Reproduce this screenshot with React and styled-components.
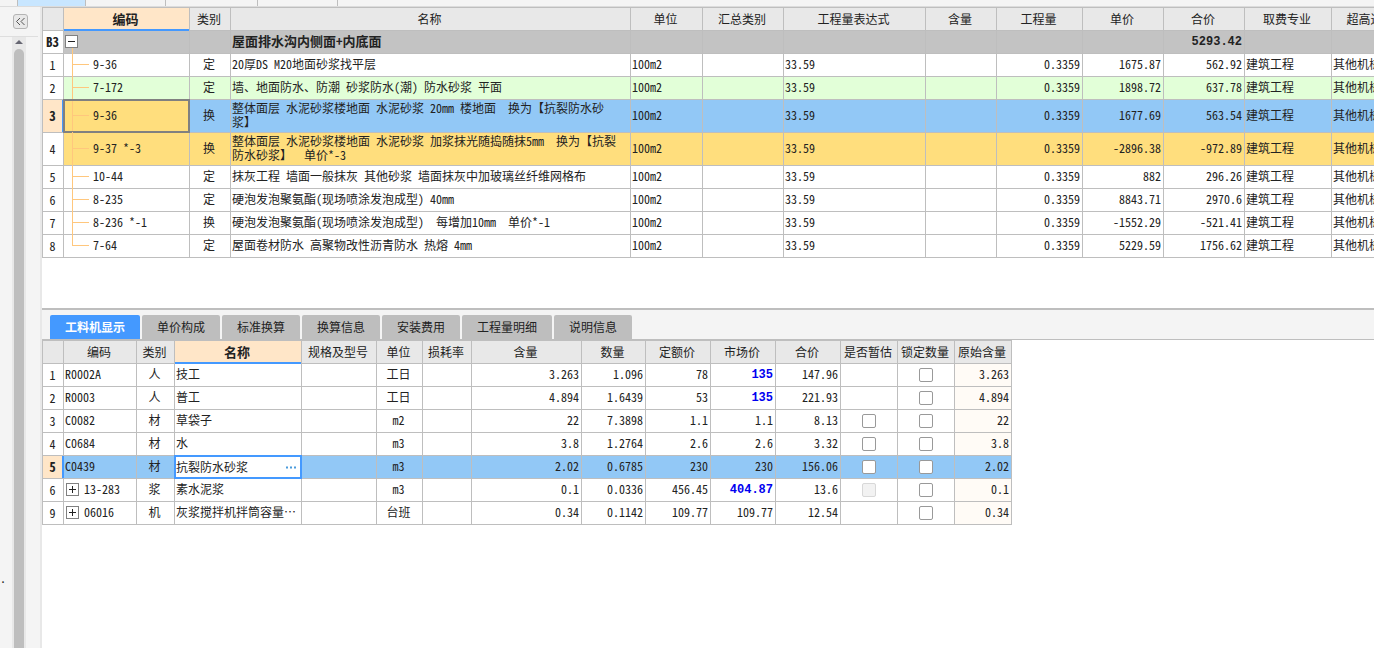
import React, { useState } from 'react'
import styled, { createGlobalStyle, css } from 'styled-components'

const colors = {
  line: '#bebebe',
  panel: '#f4f4f4',
  head: '#e8e8e8',
  headActive: '#ffe6c8',
  accent: '#4499ff',
  tree: '#ffc77d',
  group: '#c3c3c3',
  green: '#e2ffd8',
  blue: '#92c8f6',
  yellow: '#ffde7d',
  origin: '#fffbf6'
}

const stripTabs = [
  { width: 18 },
  { width: 68, active: true },
  { width: 80 },
  { width: 92 },
  { width: 80 }
]

const quotaColumns = [
  { key: 'no', title: '', width: 21 },
  { key: 'code', title: '编码', width: 126, active: true },
  { key: 'kind', title: '类别', width: 41, align: 'center' },
  { key: 'name', title: '名称', width: 400 },
  { key: 'unit', title: '单位', width: 72 },
  { key: 'summary', title: '汇总类别', width: 81 },
  { key: 'expression', title: '工程量表达式', width: 142 },
  { key: 'content', title: '含量', width: 71, align: 'right' },
  { key: 'quantity', title: '工程量', width: 86, align: 'right' },
  { key: 'price', title: '单价', width: 81, align: 'right' },
  { key: 'total', title: '合价', width: 81, align: 'right' },
  { key: 'major', title: '取费专业', width: 87 },
  { key: 'height', title: '超高过高类别', width: 104 }
]

const common = {
  unit: '100m2',
  expression: '33.59',
  quantity: '0.3359',
  major: '建筑工程',
  height: '其他机械工程'
}

const quotaRows = [
  { ...common, no: '1', code: '9-36', kind: '定', name: '20厚DS M20地面砂浆找平层', price: '1675.87', total: '562.92' },
  { ...common, no: '2', code: '7-172', kind: '定', name: '墙、地面防水、防潮 砂浆防水(潮) 防水砂浆 平面', price: '1898.72', total: '637.78', color: colors.green },
  { ...common, no: '3', code: '9-36', kind: '换', name: '整体面层 水泥砂浆楼地面 水泥砂浆 20mm 楼地面  换为【抗裂防水砂\n浆】', price: '1677.69', total: '563.54', color: colors.blue, tall: true, selected: true },
  { ...common, no: '4', code: '9-37 *-3', kind: '换', name: '整体面层 水泥砂浆楼地面 水泥砂浆 加浆抹光随捣随抹5mm  换为【抗裂\n防水砂浆】  单价*-3', price: '-2896.38', total: '-972.89', color: colors.yellow, tall: true },
  { ...common, no: '5', code: '10-44', kind: '定', name: '抹灰工程 墙面一般抹灰 其他砂浆 墙面抹灰中加玻璃丝纤维网格布', price: '882', total: '296.26' },
  { ...common, no: '6', code: '8-235', kind: '定', name: '硬泡发泡聚氨酯(现场喷涂发泡成型) 40mm', price: '8843.71', total: '2970.6' },
  { ...common, no: '7', code: '8-236 *-1', kind: '换', name: '硬泡发泡聚氨酯(现场喷涂发泡成型)  每增加10mm  单价*-1', price: '-1552.29', total: '-521.41' },
  { ...common, no: '8', code: '7-64', kind: '定', name: '屋面卷材防水 高聚物改性沥青防水 热熔 4mm', price: '5229.59', total: '1756.62' }
]

const tabs = ['工料机显示', '单价构成', '标准换算', '换算信息', '安装费用', '工程量明细', '说明信息']

const resourceColumns = [
  { key: 'no', title: '', width: 21 },
  { key: 'code', title: '编码', width: 73 },
  { key: 'kind', title: '类别', width: 38, align: 'center' },
  { key: 'name', title: '名称', width: 127, active: true },
  { key: 'spec', title: '规格及型号', width: 75 },
  { key: 'unit', title: '单位', width: 46, align: 'center' },
  { key: 'loss', title: '损耗率', width: 49 },
  { key: 'content', title: '含量', width: 110, align: 'right' },
  { key: 'amount', title: '数量', width: 64, align: 'right' },
  { key: 'fixed', title: '定额价', width: 65, align: 'right' },
  { key: 'market', title: '市场价', width: 65, align: 'right' },
  { key: 'total', title: '合价', width: 65, align: 'right' },
  { key: 'estimate', title: '是否暂估', width: 57, align: 'center' },
  { key: 'lock', title: '锁定数量', width: 57, align: 'center' },
  { key: 'origin', title: '原始含量', width: 57, align: 'right' }
]

const resourceRows = [
  { no: '1', code: 'R0002A', kind: '人', name: '技工', unit: '工日', content: '3.263', amount: '1.096', fixed: '78', market: '135', total: '147.96', changed: true },
  { no: '2', code: 'R0003', kind: '人', name: '普工', unit: '工日', content: '4.894', amount: '1.6439', fixed: '53', market: '135', total: '221.93', changed: true },
  { no: '3', code: 'C0082', kind: '材', name: '草袋子', unit: 'm2', content: '22', amount: '7.3898', fixed: '1.1', market: '1.1', total: '8.13', estimate: 'on' },
  { no: '4', code: 'C0684', kind: '材', name: '水', unit: 'm3', content: '3.8', amount: '1.2764', fixed: '2.6', market: '2.6', total: '3.32', estimate: 'on' },
  { no: '5', code: 'C0439', kind: '材', name: '抗裂防水砂浆', unit: 'm3', content: '2.02', amount: '0.6785', fixed: '230', market: '230', total: '156.06', estimate: 'on', selected: true },
  { no: '6', code: '13-283', kind: '浆', name: '素水泥浆', unit: 'm3', content: '0.1', amount: '0.0336', fixed: '456.45', market: '404.87', total: '13.6', estimate: 'off', changed: true, nested: true },
  { no: '9', code: '06016', kind: '机', name: '灰浆搅拌机拌筒容量⋯', unit: '台班', content: '0.34', amount: '0.1142', fixed: '109.77', market: '109.77', total: '12.54', nested: true }
]

const Columns = ({ columns }) => (
  <colgroup>
    {columns.map((column) => (
      <col key={column.key} width={column.width} />
    ))}
  </colgroup>
)

const HeadRow = ({ columns }) => (
  <thead>
    <tr>
      {columns.map((column) => (
        <HeadCell key={column.key} $active={column.active}>{column.title}</HeadCell>
      ))}
    </tr>
  </thead>
)

const tableWidth = (columns) => columns.reduce((sum, column) => sum + column.width, 1)

const ToggleIcon = ({ open }) => (
  <svg width="11" height="11" viewBox="0 0 11 11" aria-hidden="true">
    <path d={open ? 'M2 5.5H9' : 'M2 5.5H9M5.5 2V9'} stroke="#222" fill="none" />
  </svg>
)

const Sidebar = () => (
  <Side>
    <SideHead>
      <CollapseButton aria-label="收起">
        <svg width="13" height="13" viewBox="0 0 13 13" aria-hidden="true">
          <path d="M6 3L2.5 6.5L6 10M10.5 3L7 6.5L10.5 10" stroke="#555" fill="none" />
        </svg>
      </CollapseButton>
    </SideHead>
    <SideBody>
      <SideTree>.</SideTree>
      <ScrollTrack>
        <svg width="14" height="12" viewBox="0 0 14 12" aria-hidden="true">
          <path d="M3 7L7 3L11 7Z" fill="#666672" />
        </svg>
        <ScrollThumb />
      </ScrollTrack>
    </SideBody>
  </Side>
)

const QuotaTable = () => (
  <Table $width={tableWidth(quotaColumns)}>
    <Columns columns={quotaColumns} />
    <HeadRow columns={quotaColumns} />
    <tbody>
      <Row $color={colors.group}>
        <NumberCell $strong>B3</NumberCell>
        <Cell>
          <Toggle aria-label="折叠"><ToggleIcon open /></Toggle>
          <Stem />
        </Cell>
        <Cell />
        <Cell $strong>屋面排水沟内侧面+内底面</Cell>
        <Cell />
        <Cell />
        <Cell />
        <Cell />
        <Cell />
        <Cell />
        <Cell $align="right" $boldNumber>5293.42</Cell>
        <Cell />
        <Cell />
      </Row>
      {quotaRows.map((row, index) => (
        <Row key={row.no} $color={row.color} $tall={row.tall}>
          <NumberCell $selected={row.selected}>{row.no}</NumberCell>
          <CodeCell $color={row.selected && colors.yellow} $outline={row.selected && '#808080'}>
            <Branch $last={index === quotaRows.length - 1} />
            {row.code}
          </CodeCell>
          {quotaColumns.slice(2).map((column) => (
            <Cell key={column.key} $align={column.align}>{row[column.key]}</Cell>
          ))}
        </Row>
      ))}
    </tbody>
  </Table>
)

const NameEditor = ({ value }) => {
  const [name, setName] = useState(value)
  return (
    <Editor>
      <NameInput aria-label="名称" value={name} onChange={(e) => setName(e.target.value)} />
      <MoreButton aria-label="选择材料">
        <svg width="11" height="3" viewBox="0 0 11 3" aria-hidden="true">
          <path d="M0 0.5H2V2.5H0ZM4 0.5H6V2.5H4ZM8 0.5H10V2.5H8Z" fill="#4b9bdc" />
        </svg>
      </MoreButton>
    </Editor>
  )
}

const ResourceTable = () => (
  <Table $width={tableWidth(resourceColumns)}>
    <Columns columns={resourceColumns} />
    <HeadRow columns={resourceColumns} />
    <tbody>
      {resourceRows.map((row) => (
        <Row key={row.no} $color={row.selected && colors.blue}>
          <NumberCell $selected={row.selected}>{row.no}</NumberCell>
          <Cell>
            {row.nested
              ? <Nested><Toggle aria-label="展开"><ToggleIcon /></Toggle>{row.code}</Nested>
              : row.code}
          </Cell>
          <Cell $align="center">{row.kind}</Cell>
          <Cell $color={row.selected && '#fff'} $outline={row.selected && colors.accent}>
            {row.selected ? <NameEditor value={row.name} /> : row.name}
          </Cell>
          <Cell />
          <Cell $align="center">{row.unit}</Cell>
          <Cell />
          <Cell $align="right">{row.content}</Cell>
          <Cell $align="right">{row.amount}</Cell>
          <Cell $align="right">{row.fixed}</Cell>
          <Cell $align="right" $boldNumber={row.changed} $changed={row.changed}>{row.market}</Cell>
          <Cell $align="right">{row.total}</Cell>
          <CheckCell>
            {row.estimate && <Checkbox aria-label="是否暂估" disabled={row.estimate === 'off'} />}
          </CheckCell>
          <CheckCell><Checkbox aria-label="锁定数量" /></CheckCell>
          <Cell $align="right" $color={row.selected ? undefined : colors.origin}>{row.content}</Cell>
        </Row>
      ))}
    </tbody>
  </Table>
)

const App = () => {
  const [current, setCurrent] = useState(tabs[0])

  return (
    <Page lang="zh-CN">
      <GlobalStyle />
      <Strip>
        {stripTabs.map((tab, index) => (
          <StripTab key={index} $width={tab.width} $active={tab.active} />
        ))}
      </Strip>
      <Workspace>
        <Sidebar />
        <Main>
          <QuotaPane><QuotaTable /></QuotaPane>
          <TabBar>
            {tabs.map((tab) => (
              <Tab key={tab} $active={tab === current} onClick={() => setCurrent(tab)}>{tab}</Tab>
            ))}
          </TabBar>
          <ResourcePane><ResourceTable /></ResourcePane>
        </Main>
      </Workspace>
    </Page>
  )
}

export default App

const GlobalStyle = createGlobalStyle`
  * {
    box-sizing: border-box;
  }

  body {
    margin: 0;
    overflow: hidden;
    background: #fff;
  }

  button, input {
    margin: 0;
    padding: 0;
    font: inherit;
    font-feature-settings: inherit;
    color: inherit;
  }
`

/* hwid keeps latin letters and digits at half the width of a hanzi */
const Page = styled.div`
  display: flex;
  flex-direction: column;
  height: 100vh;
  overflow: hidden;
  color: #222;
  font-family: 'Noto Sans CJK SC', sans-serif;
  font-size: 12px;
  line-height: 14px;
  font-feature-settings: 'hwid' 1;
`

const Strip = styled.div`
  flex: 0 0 auto;
  display: flex;
  height: 7px;
  background: ${colors.panel};
  border-bottom: 1px solid #dcdcdc;
`

const StripTab = styled.div`
  width: ${(props) => props.$width}px;
  background: ${(props) => props.$active ? '#c8e6ff' : 'transparent'};
  border-right: 1px solid ${colors.line};
`

const Workspace = styled.div`
  flex: 1 1 auto;
  display: flex;
  min-height: 0;
`

const Side = styled.aside`
  flex: 0 0 auto;
  display: flex;
  flex-direction: column;
  width: 42px;
  background: ${colors.panel};
  border-right: 2px solid ${colors.head};
`

const SideHead = styled.div`
  display: flex;
  height: 30px;
  margin-right: 2px;
  padding: 7px 0 0 13px;
  border-bottom: 1px solid #dedede;
`

const CollapseButton = styled.button`
  display: flex;
  width: 15px;
  height: 15px;
  background: #e8e8e8;
  border: 1px solid #b4b4b4;
  border-radius: 3px;
`

const SideBody = styled.div`
  flex: 1 1 auto;
  display: flex;
`

const SideTree = styled.div`
  width: 12px;
  padding-top: 534px;
`

const ScrollTrack = styled.div`
  display: flex;
  flex-direction: column;
  width: 14px;
  background: ${colors.head};
`

const ScrollThumb = styled.div`
  flex: 1 1 auto;
  margin: 0 2px;
  background: ${colors.line};
  border-radius: 5px 5px 0 0;
`

const Main = styled.main`
  flex: 1 1 auto;
  display: flex;
  flex-direction: column;
  min-width: 0;
`

const QuotaPane = styled.section`
  flex: 0 0 auto;
  overflow: hidden;
  padding-bottom: 50px;
  border-bottom: 2px solid ${colors.line};
`

const TabBar = styled.nav`
  flex: 0 0 auto;
  display: flex;
  gap: 2px;
  padding: 5px 8px 0;
  background: ${colors.panel};
  border-bottom: 1px solid ${colors.line};
`

const Tab = styled.button`
  height: 24px;
  padding: 0 15px;
  background: ${(props) => props.$active ? colors.accent : colors.line};
  border: 0;
  border-radius: 2px 2px 0 0;
  color: ${(props) => props.$active ? '#fff' : '#222'};
  font-weight: ${(props) => props.$active ? 700 : 400};
`

const ResourcePane = styled.section`
  flex: 1 1 auto;
  min-height: 0;
  overflow: hidden;
`

const Table = styled.table`
  width: ${(props) => props.$width}px;
  table-layout: fixed;
  border-collapse: collapse;
`

const HeadCell = styled.th`
  position: relative;
  height: 23px;
  padding: 0 2px 0 0;
  background: ${(props) => props.$active ? colors.headActive : colors.head};
  border: 1px solid ${colors.line};
  font-weight: 400;
  white-space: nowrap;

  ${(props) => props.$active && css`
    font-size: 13px;
    font-weight: 700;

    &::after {
      content: '';
      position: absolute;
      left: 0;
      right: 0;
      bottom: -1px;
      height: 2px;
      background: ${colors.accent};
    }
  `}
`

const Row = styled.tr`
  height: ${(props) => props.$tall ? 33 : 23}px;
  background: ${(props) => props.$color || '#fff'};
`

const cellPadding = {
  left: '0 2px 2px 1px',
  center: '0 3px 2px 1px',
  right: '0 2px 2px 1px'
}

const Cell = styled.td`
  position: relative;
  padding: ${(props) => cellPadding[props.$align || 'left']};
  background: ${(props) => props.$color || 'transparent'};
  background-clip: padding-box;
  border: 1px solid ${colors.line};
  text-align: ${(props) => props.$align || 'left'};
  vertical-align: middle;
  white-space: pre;

  ${(props) => props.$strong && css`
    font-size: 13px;
    font-weight: 700;
  `}

  ${(props) => props.$boldNumber && css`
    padding-bottom: 0;
    font-family: 'Liberation Mono', monospace;
    font-weight: 700;
  `}

  ${(props) => props.$changed && css`
    color: #0000f0;
  `}

  ${(props) => props.$outline && css`
    padding-bottom: 0;

    &::after {
      content: '';
      position: absolute;
      inset: -1px;
      border: 2px solid ${props.$outline};
      pointer-events: none;
    }
  `}
`

const NumberCell = styled(Cell)`
  padding: 0 1px 0 0;
  background: ${(props) => props.$selected ? colors.headActive : '#fff'};
  text-align: center;

  ${(props) => props.$selected && css`
    font-size: 13px;
    font-weight: 700;

    &::after {
      content: '';
      position: absolute;
      top: 0;
      bottom: 0;
      right: -1px;
      width: 2px;
      background: ${colors.accent};
    }
  `}
`

const CodeCell = styled(Cell)`
  padding: 0 0 2px 29px;
`

const CheckCell = styled(Cell)`
  padding: 0;
`

const Stem = styled.span`
  position: absolute;
  left: 8px;
  top: 17px;
  bottom: 0;
  border-left: 1px solid ${colors.tree};
`

const Branch = styled.span`
  position: absolute;
  left: 8px;
  top: -1px;
  bottom: ${(props) => props.$last ? '50%' : '0'};
  border-left: 1px solid ${colors.tree};

  &::after {
    content: '';
    position: absolute;
    left: 0;
    bottom: ${(props) => props.$last ? '0' : '50%'};
    width: 16px;
    border-top: 1px solid ${colors.tree};
  }
`

const Nested = styled.span`
  display: flex;
  align-items: center;
  gap: 5px;
  padding-left: 1px;
`

const Toggle = styled.button`
  display: block;
  width: 13px;
  height: 13px;
  background: #fff;
  border: 1px solid #808080;

  svg {
    display: block;
  }
`

const Editor = styled.div`
  display: flex;
  align-items: center;
`

const NameInput = styled.input`
  flex: 1 1 auto;
  min-width: 0;
  height: 18px;
  padding-bottom: 2px;
  background: transparent;
  border: 0;
  outline: 0;
`

const MoreButton = styled.button`
  display: flex;
  width: 14px;
  background: transparent;
  border: 0;
`

const Checkbox = styled.input.attrs({ type: 'checkbox' })`
  display: block;
  width: 14px;
  height: 14px;
  margin: 0 auto;
  appearance: none;
  background: #fff;
  border: 1px solid #999;
  border-radius: 2px;

  &:checked {
    background: ${colors.accent};
  }

  &:disabled {
    background: #f2f2f2;
    border-color: #d8d8d8;
  }
`
